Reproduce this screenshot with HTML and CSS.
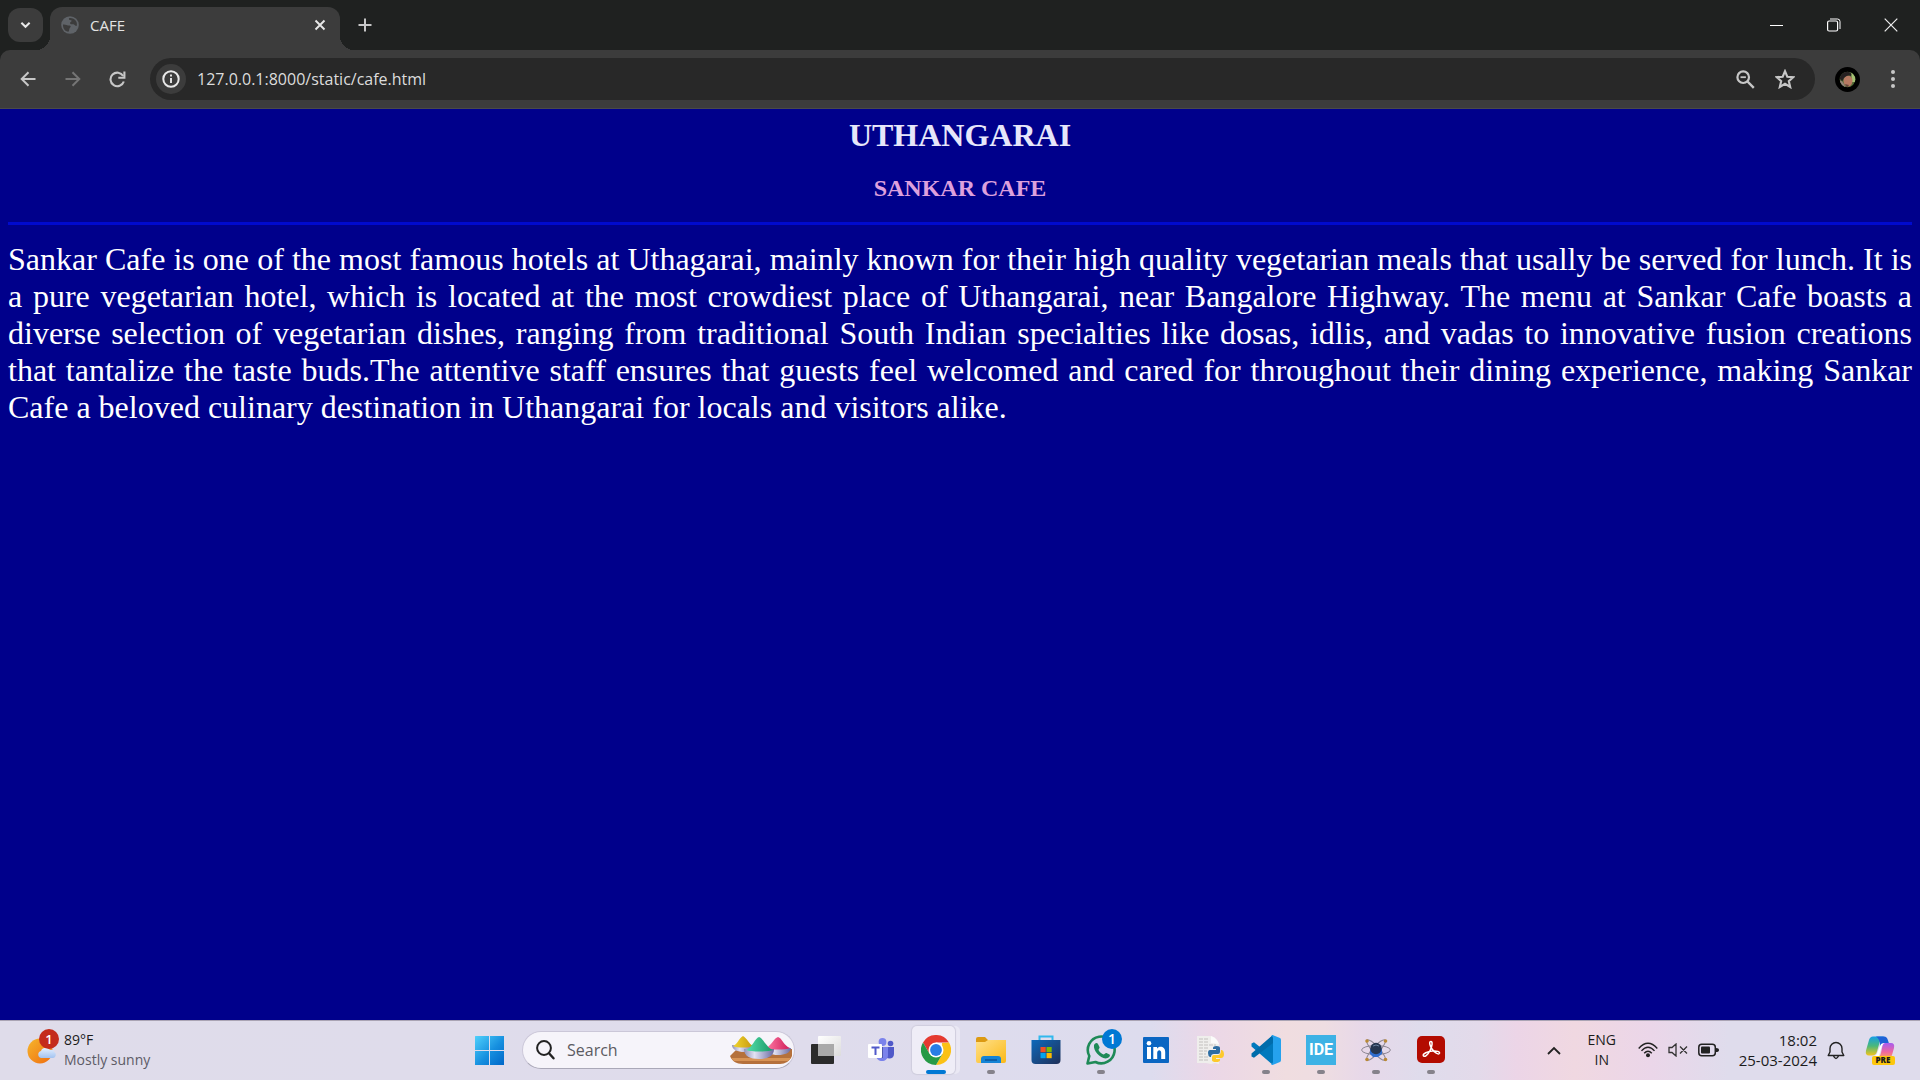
FILE: index.html
```html
<!DOCTYPE html>
<html lang="en">
<head>
<meta charset="utf-8">
<meta name="viewport" content="width=device-width, initial-scale=1">
<title>CAFE</title>
<link rel="stylesheet" href="styles.css">
</head>
<body>
<div class="desktop">
  <header class="browser">
    <div class="tab-strip">
      <button class="tab-search" type="button" aria-label="Search tabs">
        <svg width="11" height="8" viewBox="0 0 12 8"><path d="M1.500 1.500 6 6l4.500-4.500" fill="none" stroke="#e8e8e8" stroke-width="2.200"/></svg>
      </button>
      <div class="tab">
        <svg class="favicon" width="18" height="18" viewBox="0 0 18 18"><circle cx="9" cy="9" r="8.800" fill="#5f6368"/><path d="M2 8.500C4 8 6 9.500 8.500 9.500c1.500 0 1.500 1.500.5 2.200s-.5 2.300-1.500 4C4 15.500 1.800 12.500 2 8.500Z M8 2.200C10 1.500 13.500 2.500 15 5c1.300 2 1 4 .6 5-1.600.2-1.600-1.500-3.100-1.800-1.500-.2-3 .2-3.500-1 0-1.500 2-1.200 1.700-2.700C9.500 4 7.500 4 8 2.200Z" fill="#3c3c3c"/></svg>
        <span class="tab-title">CAFE</span>
        <button class="icon-btn tab-close" type="button" aria-label="Close tab">
          <svg width="12" height="12" viewBox="0 0 12 12"><path d="m1.500 1.500 9 9m0-9-9 9" stroke="#e8e8e8" stroke-width="1.900"/></svg>
        </button>
      </div>
      <button class="icon-btn new-tab" type="button" aria-label="New tab">
        <svg width="14" height="14" viewBox="0 0 14 14"><path d="M7 .5v13M.5 7h13" stroke="#c7c7c7" stroke-width="2"/></svg>
      </button>
      <div class="window-controls">
        <button class="window-btn" type="button" aria-label="Minimize"><svg width="13" height="13" viewBox="0 0 13 13"><path d="M0 6.500h13" stroke="#fff"/></svg></button>
        <button class="window-btn" type="button" aria-label="Restore"><svg width="14" height="14" viewBox="0 0 14 14" fill="none" stroke="#fff"><rect x=".6" y="3" width="10" height="10" rx="1.500" stroke-width="1.200"/><path d="M3 1h7.500A2.500 2.500 0 0 1 13 3.500V11"/></svg></button>
        <button class="window-btn" type="button" aria-label="Close"><svg width="14" height="14" viewBox="0 0 14 14"><path d="m.7.700 12.600 12.600m0-12.600L.7 13.300" stroke="#eee" stroke-width="1.200"/></svg></button>
      </div>
    </div>
    <nav class="toolbar" aria-label="Browser toolbar">
      <button class="icon-btn tool" type="button" aria-label="Back"><svg width="16" height="16" viewBox="0 0 16 16"><path d="M15.500 8H2M8.500 1.200 1.700 8l6.800 6.800" fill="none" stroke="#c7c7c7" stroke-width="2"/></svg></button>
      <button class="icon-btn tool" type="button" aria-label="Forward"><svg width="16" height="16" viewBox="0 0 16 16"><path d="M.5 8H14M7.500 1.200 14.300 8l-6.800 6.800" fill="none" stroke="#757575" stroke-width="2"/></svg></button>
      <button class="icon-btn tool" type="button" aria-label="Reload"><svg width="17" height="17" viewBox="0 0 17 17"><path d="M14.800 10.500a6.800 6.800 0 1 1-.6-5.500" fill="none" stroke="#c7c7c7" stroke-width="2.100"/><path d="M15.400.500v6.200H9.300" fill="none" stroke="#c7c7c7" stroke-width="2.100"/></svg></button>
      <form class="omnibox">
        <button class="site-info" type="button" aria-label="View site information"><svg width="18" height="18" viewBox="0 0 18 18"><circle cx="9" cy="9" r="7.700" fill="none" stroke="#e8e8e8" stroke-width="2"/><path d="M9 8v5M9 4.600v2" stroke="#e8e8e8" stroke-width="1.900"/></svg></button>
        <input class="address" type="text" aria-label="Address and search bar" value="127.0.0.1:8000/static/cafe.html" spellcheck="false">
        <button class="icon-btn omni-btn" type="button" aria-label="Zoom"><svg width="19" height="19" viewBox="0 0 19 19" fill="none" stroke="#c7c7c7"><circle cx="7.200" cy="7.200" r="5.800" stroke-width="2.200"/><path d="m11.500 11.500 6.300 6.300" stroke-width="2.400"/><path d="M4.500 7.200h5.400" stroke-width="1.800"/></svg></button>
        <button class="icon-btn omni-btn" type="button" aria-label="Bookmark this tab"><svg width="20" height="20" viewBox="0 0 20 20"><path d="m10 2.200 2.300 5.500 6 .5-4.500 3.900 1.400 5.900-5.200-3.200L4.800 18l1.400-5.900-4.500-3.900 6-.5Z" fill="none" stroke="#c7c7c7" stroke-width="2.100"/></svg></button>
      </form>
      <button class="icon-btn tool" type="button" aria-label="Profile"><svg width="25" height="25" viewBox="0 0 25 25"><defs><clipPath id="face"><circle cx="12.500" cy="12.500" r="7.800"/></clipPath></defs><circle cx="12.500" cy="12.500" r="12.500" fill="#000"/><g clip-path="url(#face)"><path d="M4 4h17v17H4z" fill="#536d38"/><path d="M16 3h6v12h-5z" fill="#a5c174"/><path d="M4 14c3-1 4 1 7 7H4z" fill="#94857c"/><ellipse cx="13" cy="14" rx="4.500" ry="5.500" fill="#b67a62"/><path d="M5 12c-1-5 3-8 7-7 4 0 5 2 4 4-3-1-5 0-7 2-1 1-1 3-2 3Z" fill="#252021"/><path d="m10 17 4 1-2 3Z" fill="#66483d"/></g></svg></button>
      <button class="icon-btn tool" type="button" aria-label="Browser menu"><svg width="4" height="18" viewBox="0 0 4 18" fill="#c7c7c7"><circle cx="2" cy="2" r="2"/><circle cx="2" cy="9" r="2"/><circle cx="2" cy="16" r="2"/></svg></button>
    </nav>
  </header>

  <main class="page">
    <h1 class="town">UTHANGARAI</h1>
    <h2 class="cafe">SANKAR CAFE</h2>
    <hr class="rule">
    <p class="about">Sankar Cafe is one of the most famous hotels at Uthagarai, mainly known for their high quality vegetarian meals that usally be served for lunch. It is a pure vegetarian hotel, which is located at the most crowdiest place of Uthangarai, near Bangalore Highway. The menu at Sankar Cafe boasts a diverse selection of vegetarian dishes, ranging from traditional South Indian specialties like dosas, idlis, and vadas to innovative fusion creations that tantalize the taste buds.The attentive staff ensures that guests feel welcomed and cared for throughout their dining experience, making Sankar Cafe a beloved culinary destination in Uthangarai for locals and visitors alike.</p>
  </main>

  <footer class="taskbar">
    <button class="weather" type="button">
      <svg width="34" height="36" viewBox="0 0 34 36"><defs><linearGradient id="sun" x1="0" y1="0" x2="1" y2="1"><stop stop-color="#f6b62c"/><stop offset="1" stop-color="#ef6c10"/></linearGradient><linearGradient id="cloud" x1="0" y1="0" x2="0" y2="1"><stop stop-color="#e5f0ff"/><stop offset="1" stop-color="#a3c3f0"/></linearGradient></defs><circle cx="14" cy="22" r="12.500" fill="url(#sun)"/><path d="M15 29a3.600 3.600 0 0 1 0-7c1-3.500 7-4.500 9-1 3-.5 4 .5 4 2 3 1 2 6-1 6Z" fill="url(#cloud)"/><circle cx="23" cy="10" r="10" fill="#c42b1c"/><text x="23" y="15" class="badge-text">1</text></svg>
      <span class="weather-text"><span class="line">89°F</span><span class="line muted">Mostly sunny</span></span>
    </button>

    <div class="dock">
      <button class="pin" type="button" aria-label="Start"><svg width="30" height="30" viewBox="1 0 30 30"><defs><linearGradient id="win" x1="0" y1="0" x2="1" y2="1"><stop stop-color="#4fd0fb"/><stop offset=".55" stop-color="#168fdf"/><stop offset="1" stop-color="#0067c8"/></linearGradient></defs><path d="M1.500 1H15V15H1V1.500A.5.500 0 0 1 1.500 1ZM16 1h14v14h-14ZM1 16h14v14H1ZM16 16h14v14h-14Z" fill="url(#win)"/></svg></button>
      <label class="search">
        <svg width="19" height="20" viewBox="0 0 19 20"><circle cx="8" cy="8" r="6.900" fill="none" stroke="#222" stroke-width="2"/><path d="m13 13.300 4.500 5" stroke="#222" stroke-width="2.400" stroke-linecap="round"/></svg>
        <input class="search-input" type="search" placeholder="Search" aria-label="Search">
        <svg class="holi" width="64" height="30" viewBox="0 0 64 30"><defs><linearGradient id="bowl" x1="0" y1="0" x2="1" y2="0"><stop stop-color="#9191b8"/><stop offset=".35" stop-color="#e2e2f3"/><stop offset="1" stop-color="#6a6aa2"/></linearGradient><linearGradient id="yel"><stop stop-color="#f1d52e"/><stop offset="1" stop-color="#c79a0e"/></linearGradient><linearGradient id="grn"><stop stop-color="#54e0ad"/><stop offset="1" stop-color="#199765"/></linearGradient><linearGradient id="pnk"><stop stop-color="#ff7ba5"/><stop offset="1" stop-color="#cf1c59"/></linearGradient></defs><path d="M1 21 7 15l56-1v7c-2 5-7 8-12 8H14C7 29 3 26 1 21Z" fill="#b5713c"/><path d="M2 23h60l-3 3H5Z" fill="#d89456"/><path d="M3 10h22c0 5-4 7-10 7S3 15 3 10Z" fill="url(#bowl)"/><path d="M4 11c4-1 6-8 10-10 4 2 6 8 10 10-4 2-16 2-20 0Z" fill="url(#yel)"/><path d="M36 13h26c-1 5-6 7-13 7s-12-2-13-7Z" fill="url(#bowl)"/><path d="M37 13c5-2 8-10 12-11 4 1 6 9 12 11-5 2-19 2-24 0Z" fill="url(#pnk)"/><path d="M15 14h30c0 7-6 10-15 10s-15-3-15-10Z" fill="url(#bowl)"/><path d="M17 15c6-2 9-12 13-13 4 1 8 11 14 13-5 2-22 2-27 0Z" fill="url(#grn)"/></svg>
      </label>
      <button class="pin" type="button" aria-label="Task view"><svg width="30" height="30" viewBox="0 0 30 30"><defs><linearGradient id="tv" x1="0" y1="0" x2="1" y2="1"><stop stop-color="#fff"/><stop offset="1" stop-color="#dcdcdc"/></linearGradient></defs><rect x="0" y="9" width="23" height="20" rx="1" fill="#2b2b2b"/><rect x="7" y="1" width="23" height="20" rx="1" fill="url(#tv)"/><path d="M7 9h16v12H8a1 1 0 0 1-1-1Z" fill="#a9a9a9"/></svg></button>
      <button class="pin" type="button" aria-label="Teams"><svg width="28" height="26" viewBox="0 0 28 26"><circle cx="23.500" cy="6.500" r="2.800" fill="#5059c9"/><path d="M18 10h9v7c0 6-9 6-9 0Z" fill="#5059c9"/><circle cx="15.500" cy="5" r="3.900" fill="#7b83eb"/><path d="M9 10h12v8c0 8-12 8-12 0Z" fill="#7b83eb"/><path d="M10 10h6v11h-6Z" fill="#5059ad"/><rect x="1" y="7" width="14" height="14" rx="1" fill="#fff"/><path d="M4.500 10.500h8M8.500 10.500V18" stroke="#5059c9" stroke-width="2"/></svg></button>
      <button class="pin active" type="button" aria-label="Google Chrome"><svg width="30" height="30" viewBox="0 0 30 30"><path d="M2 7.500A15 15 0 0 1 28 7.500H15L8.500 18.700Z" fill="#e53a30"/><path d="M28 7.500A15 15 0 0 1 15 30l6.500-11.200L21 8Z" fill="#fbc116"/><path d="M21.500 18.700 15 30A15 15 0 0 1 2 7.500l6.500 11.200Z" fill="#269a46"/><circle cx="15" cy="15" r="7.500" fill="#fff"/><circle cx="15" cy="15" r="5.900" fill="#287de6"/></svg></button>
      <button class="pin open" type="button" aria-label="File Explorer"><svg width="30" height="28" viewBox="0 0 30 28"><defs><linearGradient id="fold" x1="0" y1="0" x2="1" y2="1"><stop stop-color="#ffe08a"/><stop offset="1" stop-color="#fbb917"/></linearGradient></defs><path d="M0 3q0-2 2-2h7l3 3h16q2 0 2 2v6H0Z" fill="#dc9a12"/><path d="M0 6h9l3-2h18v21q0 2-2 2H2q-2 0-2-2Z" fill="url(#fold)"/><path d="M5 27v-4q0-3 3-3h14q3 0 3 3v4Z" fill="#1584d6"/><path d="M9 24h12" stroke="#0b559a" stroke-width="1.500"/></svg></button>
      <button class="pin" type="button" aria-label="Microsoft Store"><svg width="30" height="30" viewBox="0 0 30 30"><defs><linearGradient id="bag" x1="0" y1="0" x2="1" y2="1"><stop stop-color="#0e69bb"/><stop offset="1" stop-color="#203058"/></linearGradient></defs><path d="M8.500 7V1.500h13V7" fill="none" stroke="#31b8ed" stroke-width="2"/><path d="M.5 5h29v20q0 4-4 4h-21q-4 0-4-4Z" fill="url(#bag)"/><path d="M9.500 12h5.200v5.200H9.500Z" fill="#f25022"/><path d="M15.500 12h5.200v5.200h-5.200Z" fill="#7fba00"/><path d="M9.500 18h5.200v5.200H9.500Z" fill="#00a4ef"/><path d="M15.500 18h5.200v5.200h-5.200Z" fill="#ffb900"/></svg></button>
      <button class="pin open" type="button" aria-label="WhatsApp, 1 new"><svg width="30" height="30" viewBox="0 0 30 30"><path d="M1.500 28.500 3.300 21A13.400 13.400 0 1 1 9.500 27Z" fill="none" stroke="#1e8a57" stroke-width="2.600" stroke-linejoin="round"/><path d="M8 10c1-2 3-3 4-1l1.500 3c.5 1-1 2-1 3 1 2 3 4 5 4.500 1 0 2-2 3-1.500l3 1.500c1.500 1-1 4-4 4C14 23 7 16 8 10Z" fill="#1e8a57"/></svg><span class="notify">1</span></button>
      <button class="pin" type="button" aria-label="LinkedIn"><svg width="26" height="26" viewBox="0 0 26 26"><rect width="26" height="26" rx="1" fill="#0a66c2"/><circle cx="6" cy="6.300" r="2.300" fill="#fff"/><path d="M4 10h4v12H4ZM10.300 10H14v1.700c2-3 8.200-2.700 8.200 3.300v7h-4v-6.200c0-3.500-4-3.300-4 0V22h-3.900Z" fill="#fff"/></svg></button>
      <button class="pin" type="button" aria-label="Python file"><svg width="30" height="30" viewBox="0 0 30 30"><path d="M1 1h14q6 2 8 8v20l-4-1-4 1-5-1H1Z" fill="#efeeec"/><path d="M15 1v7l8 1q-2-6-8-8Z" fill="#fbfbfa"/><path d="M3 4h10M3 7h10M3 10h17M3 13h9M3 16h8M3 19h7M3 22h9M3 25h9" stroke="#d2d0cd" stroke-width="1.500" stroke-dasharray="4 1"/><path d="M17 15v-2q0-2 3.500-2t3.500 2v4q0 2-2 2h-4q-3 0-3 3h-1q-2-1-2-4 0-3 2-3h6v-1h-3Z" fill="#2d6da3"/><path d="M25 15h1q2 1 2 4 0 4-3 4h-5v1h4v1q0 2-4 2t-4-2v-3q0-2 2-2h4q3 0 3-5Z" fill="#fdc92b"/></svg></button>
      <button class="pin open" type="button" aria-label="Visual Studio Code"><svg width="30" height="30" viewBox="0 0 30 30"><path d="M22 0 9 12 3 7.200.500 8.500v3L22 30l1-9Z" fill="#0079bd"/><path d="M22 0v8L3 22.800.500 21.500v-3Z" fill="#006cab"/><path d="M21.500 0 29 3q1 .5 1 2v20q0 1.500-1 2l-7.500 3q-1 0-1.500-1 2 0 2-2V3q0-2-2-2Z" fill="#25a2ee"/></svg></button>
      <button class="pin open" type="button" aria-label="Arduino IDE"><svg width="30" height="30" viewBox="0 0 30 30"><path d="M0 0h30v30H0Z" fill="#3db2e5"/><text x="15" y="20" class="ide-text">IDE</text></svg></button>
      <button class="pin open" type="button" aria-label="Atom viewer"><svg width="30" height="24" viewBox="0 0 30 24"><g fill="none" stroke="#8d8794"><ellipse cx="15" cy="12" rx="14.400" ry="4.500"/><ellipse cx="15" cy="12" rx="13.500" ry="3.500" transform="rotate(48 15 12)"/><ellipse cx="15" cy="12" rx="13.500" ry="3.500" transform="rotate(-48 15 12)"/></g><path d="M9 11h12v5l-4 3h-5l-3-3Z" fill="#2f6ed0"/><circle cx="15" cy="10.500" r="5.700" fill="#26364f"/><path d="M12 8q3-2 6 0" fill="none" stroke="#69809e"/><g fill="#b98936"><circle cx="6" cy="3" r="1.800"/><circle cx="24.500" cy="3" r="1.800"/><circle cx="6" cy="21.500" r="1.800"/><circle cx="24.500" cy="21.500" r="1.800"/></g></svg></button>
      <button class="pin open" type="button" aria-label="Adobe Acrobat"><svg width="28" height="28" viewBox="0 0 28 28"><rect width="28" height="27" rx="5" fill="#b30b00"/><path d="M13.600 5.500c2.500-.5 1.500 5-.5 9-2.200 4.500-6 7.200-6.800 5.200-.7-2 4.200-4.200 9.200-4.700 4.500-.4 7.500.6 7 2.200-.8 2-5.200-.7-7.500-4.200-2-3-3.200-7.200-1.400-7.500Z" fill="none" stroke="#fff" stroke-width="1.500"/></svg></button>
    </div>

    <div class="tray">
      <button class="tray-btn chevron" type="button" aria-label="Show hidden icons"><svg width="14" height="9" viewBox="0 0 14 9"><path d="m1 8 6-6 6 6" fill="none" stroke="#222" stroke-width="1.800"/></svg></button>
      <button class="tray-btn lang" type="button"><span class="line">ENG</span><span class="line">IN</span></button>
      <button class="tray-btn status" type="button" aria-label="Network, volume and battery">
        <svg width="20" height="16" viewBox="0 0 20 16"><g fill="none" stroke="#222" stroke-width="1.400"><path d="M.7 6.500q9.300-10.500 18.600 0M3.500 8.900q6.500-7.200 13 0M6.200 11.300q3.800-4.200 7.600 0"/></g><circle cx="10" cy="13.200" r="2" fill="#222"/></svg>
        <svg width="20" height="14" viewBox="0 0 20 14"><path d="M1 4.500h3L8 1v12L4 9.500H1ZM12 3.500l7 7m0-7-7 7" fill="none" stroke="#333" stroke-width="1.300"/></svg>
        <svg width="21" height="14" viewBox="0 0 21 14"><rect x=".8" y="1.300" width="16.500" height="11.500" rx="3" fill="none" stroke="#222" stroke-width="1.500"/><rect x="3" y="3.500" width="9" height="7" rx="1" fill="#222"/><path d="M18 5q3 0 3 2t-3 2Z" fill="#222"/></svg>
      </button>
      <button class="tray-btn clock" type="button"><span class="line">18:02</span><span class="line">25-03-2024</span></button>
      <button class="tray-btn bell" type="button" aria-label="Notifications"><svg width="18" height="19" viewBox="0 0 18 19"><path d="M3 7.500a6 6 0 0 1 12 0V11l1.800 3.500H1.200L3 11ZM6.500 15q2.500 5 5 0" fill="none" stroke="#222" stroke-width="1.400" stroke-linejoin="round"/></svg></button>
      <button class="tray-btn copilot" type="button" aria-label="Copilot preview"><svg width="30" height="29" viewBox="0 0 30 29"><defs><linearGradient id="cpa" x1="0" y1="0" x2="0" y2="1"><stop stop-color="#159fe5"/><stop offset=".5" stop-color="#4bb87a"/><stop offset="1" stop-color="#f3c51c"/></linearGradient><linearGradient id="cpb" x1="0" y1="0" x2="0" y2="1"><stop stop-color="#a65cf0"/><stop offset=".6" stop-color="#f0679f"/><stop offset="1" stop-color="#f8a25d"/></linearGradient></defs><path d="M8 .5h11q-4 2-5 8l-2 7q-1 4-5 4H4q-4 0-3-5L4 4Q5 .500 8 .500Z" fill="url(#cpa)"/><path d="M11 .5h8q3 0 4 4l1 3h-5q-3 0-4 3 0-8-4-10Z" fill="#1f62d6"/><path d="M18 7h8q4 0 3 5l-2 7q-1 3-4 3H12q3-1 4-5Z" fill="url(#cpb)"/><path d="M16 8q2-1 4-1-3 1-4 6l-2 7h-4q2-1 3-5Z" fill="#fff"/><rect x="7" y="20" width="23" height="9" rx="2" fill="#fdc70c"/><text x="18" y="27" class="pre-text">PRE</text></svg></button>
    </div>
  </footer>
</div>
</body>
</html>
```
FILE: styles.css
```css
* {
  box-sizing: border-box;
}

body {
  margin: 0;
  font-family: "Open Sans", "Noto Sans", sans-serif;
  background: #00008b;
}

button,
input {
  margin: 0;
  padding: 0;
  border: 0;
  background: none;
  font: inherit;
  color: inherit;
}

svg {
  display: block;
  flex: none;
}

.desktop {
  min-height: 100vh;
  display: flex;
  flex-direction: column;
}

/* Browser chrome */
.browser {
  background: #1f2120;
}

.tab-strip {
  height: 50px;
  display: flex;
  align-items: center;
  padding-left: 8px;
}

.icon-btn,
.window-btn,
.tab-search,
.site-info {
  display: flex;
  align-items: center;
  justify-content: center;
  flex: none;
}

.tab-search {
  width: 35px;
  height: 34px;
  border-radius: 12px;
  background: #3c3c3c;
}

.tab {
  position: relative;
  align-self: flex-end;
  width: 290px;
  height: 43px;
  margin-left: 7px;
  padding: 0 8px 7px 11px;
  display: flex;
  align-items: center;
  border-radius: 12px 12px 0 0;
  background: #3c3c3c;
}

.tab::before,
.tab::after {
  content: "";
  position: absolute;
  bottom: 0;
  width: 14px;
  height: 14px;
}

.tab::before {
  right: 100%;
  background: radial-gradient(circle at 0 0, transparent 14px, #3c3c3c 14px);
}

.tab::after {
  left: 100%;
  background: radial-gradient(circle at 100% 0, transparent 14px, #3c3c3c 14px);
}

.tab-title {
  flex: 1;
  margin-left: 11px;
  font-size: 15px;
  line-height: 20px;
  color: #e3e3e3;
}

.tab-close {
  width: 24px;
  height: 24px;
}

.new-tab {
  width: 34px;
  height: 34px;
  margin-left: 8px;
}

.window-controls {
  display: flex;
  margin-left: auto;
  padding-right: 1px;
}

.window-btn {
  width: 57px;
  height: 48px;
}

.toolbar {
  height: 59px;
  display: flex;
  align-items: center;
  padding: 0 5px;
  border-bottom: 1px solid #4a4a4a;
  border-radius: 10px 10px 0 0;
  background: #3c3c3c;
}

.tool {
  width: 45px;
  height: 42px;
}

.omnibox {
  flex: 1;
  height: 42px;
  margin: 0 10px;
  padding: 0 10px 0 6px;
  display: flex;
  align-items: center;
  border-radius: 21px;
  background: #282828;
}

.site-info {
  width: 30px;
  height: 30px;
  border-radius: 50%;
  background: #3c3c3c;
}

.address {
  flex: 1;
  min-width: 0;
  margin-left: 11px;
  font-size: 16px;
  line-height: 24px;
  color: #dcdcdc;
}

.omni-btn {
  width: 40px;
  height: 40px;
}

/* Cafe page */
.page {
  flex: 1;
  padding: 8px;
  font-family: "Liberation Serif", "Times New Roman", serif;
  background: #00008b;
}

.town,
.cafe {
  margin: 0 0 20px;
  text-align: center;
}

.town {
  font-size: 32px;
  line-height: 37px;
  color: #e6e6fa;
}

.cafe {
  font-size: 24px;
  line-height: 28px;
  color: #dda0dd;
}

.rule {
  height: 3px;
  margin: 0;
  border: 0;
  background: #000acd;
}

.about {
  margin: 16px 0;
  font-size: 32px;
  line-height: 37px;
  text-align: justify;
  color: #fff;
}

/* Taskbar */
.taskbar {
  height: 60px;
  display: grid;
  grid-template-columns: 1fr auto 1fr;
  align-items: center;
  box-shadow: inset 0 1px #aaa4b4;
  background: linear-gradient(90deg, #dfdcea 0%, #dfdcec 42%, #dddcee 60%, #ebd7e7 63%, #f0dde0 67%, #eedde2 69%, #e7d8e9 71%, #dfdcec 74%, #e3daea 77%, #ecd5e7 79%, #f0d8e1 82%, #ebd6e9 86%, #dfdcec 90%, #dfdcec 100%);
  color: #1b1b1b;
  font-size: 15px;
  line-height: 20px;
}

.line {
  display: block;
}

.muted {
  color: #5d5b66;
}

.weather {
  display: flex;
  align-items: center;
  gap: 4px;
  justify-self: start;
  margin-left: 26px;
  text-align: left;
}

.weather svg {
  margin-bottom: 6px;
}

.weather-text {
  font-size: 14px;
}

.badge-text {
  font: 600 13px "Open Sans", sans-serif;
  text-anchor: middle;
  fill: #fff;
}

.dock {
  display: flex;
  align-items: center;
}

.pin {
  position: relative;
  width: 55px;
  height: 48px;
  display: flex;
  align-items: center;
  justify-content: center;
}

.search {
  width: 273px;
  height: 38px;
  margin: 0 3px 0 5px;
  padding: 0 1px 0 13px;
  display: flex;
  align-items: center;
  border: 1px solid #cbc7d8;
  border-bottom-color: #aaa8b8;
  border-radius: 19px;
  background: #f6f4fa;
}

.search-input {
  flex: 1;
  min-width: 0;
  margin-left: 12px;
  font-size: 16px;
  line-height: 22px;
}

.search-input::placeholder {
  color: #5c5b62;
  opacity: 1;
}

.pin.active::before {
  content: "";
  position: absolute;
  inset: 0 8px 0 4px;
  border-radius: 5px;
  background: #efedf7;
  box-shadow: 0 0 1px 1px #cfcddd, 5px 0 0 #eae8f4;
}

.pin svg {
  position: relative;
}

.pin.open::after,
.pin.active::after {
  content: "";
  position: absolute;
  left: 50%;
  bottom: 0;
  width: 8px;
  height: 4px;
  margin-left: -4px;
  border-radius: 2px;
  background: #85828b;
}

.pin.active::after {
  width: 20px;
  margin-left: -10px;
  background: #0078d4;
}

.notify {
  position: absolute;
  top: 3px;
  right: 6px;
  width: 20px;
  height: 20px;
  border-radius: 50%;
  background: #0078d4;
  color: #fff;
  font-size: 14px;
  font-weight: 600;
  line-height: 20px;
  text-align: center;
}

.ide-text {
  font: 700 16px Roboto, sans-serif;
  text-anchor: middle;
  fill: #fff;
}

.tray {
  display: flex;
  align-items: center;
  justify-self: end;
  padding-right: 15px;
}

.tray-btn {
  height: 48px;
}

.chevron,
.bell,
.copilot {
  display: flex;
  align-items: center;
  justify-content: center;
}

.chevron {
  width: 36px;
}

.lang {
  width: 60px;
  font-size: 14px;
}

.status {
  display: flex;
  align-items: center;
  gap: 10px;
  padding: 0 6px;
}

.clock {
  padding-left: 14px;
  text-align: right;
}

.bell {
  width: 38px;
}

.copilot {
  width: 50px;
}

.pre-text {
  font: 800 8px "Open Sans", sans-serif;
  text-anchor: middle;
  fill: #1b1b1b;
}
```
